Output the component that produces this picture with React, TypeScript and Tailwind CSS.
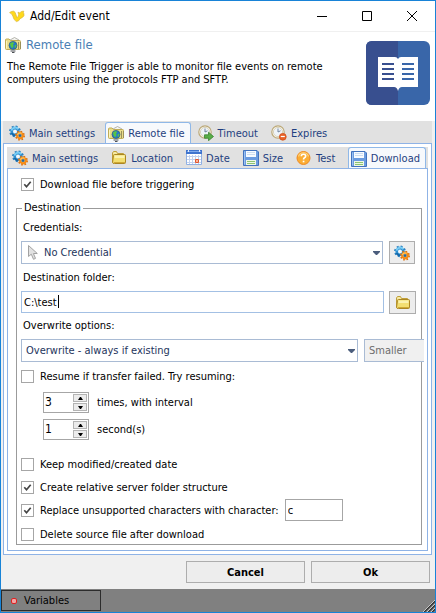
import { useState, type ReactNode } from "react";

function GearsIcon() {
  return (
    <svg width="16" height="16" viewBox="0 0 16 16" className="shrink-0" aria-hidden="true">
      <circle cx="6" cy="6.4" r="4.8" fill="none" stroke="#2a7fbe" strokeWidth="2.2" strokeDasharray="1.88 1.89" />
      <circle cx="6" cy="6.4" r="3.3" fill="#f4f8fb" stroke="#2f8fd0" strokeWidth="2.6" />
      <path d="M2.4 5.6A3.8 3.8 0 0 1 9.2 4.2" fill="none" stroke="#79cdf5" strokeWidth="2" />
      <path d="M2.6 8.2A3.8 3.8 0 0 0 6 10.4" fill="none" stroke="#1668a8" strokeWidth="1.8" />
      <circle cx="11" cy="10.6" r="4" fill="none" stroke="#dd7010" strokeWidth="2" strokeDasharray="1.57 1.57" />
      <circle cx="11" cy="10.6" r="2.7" fill="#fff3dc" stroke="#f58a14" strokeWidth="2.2" />
      <path d="M8.4 9.8A2.8 2.8 0 0 1 12.6 8.4" fill="none" stroke="#ffc35a" strokeWidth="1.2" />
      <circle cx="11" cy="10.6" r="1.5" fill="#2a6a98" />
    </svg>
  );
}

function RemoteFolderIcon() {
  return (
    <svg width="16" height="16" viewBox="0 0 16 16" className="shrink-0" aria-hidden="true">
      <path d="M5 3L9.5 .5 14 3V6H5Z" fill="#f4f4f0" stroke="#a3a39b" strokeWidth=".8" />
      <path d="M.5 3Q.5 2 1.5 2H4L5.5 3.5H14.5Q15.5 3.5 15.5 4.5V11.5Q15.5 12.5 14.5 12.5H1.5Q.5 12.5 .5 11.5Z" fill="#e9dc8a" stroke="#c0ac55" />
      <path d="M1.5 4V11.5" stroke="#fbf4c0" />
      <path d="M13.5 5V12M15.5 5V12" stroke="#9c9058" />
      <circle cx="8" cy="8.4" r="4" fill="#2277cf" stroke="#35657c" strokeWidth=".8" />
      <path d="M5 6.5L7.5 5 9.4 6 8 7.5 8.7 9 7 11.4 5.4 9ZM9.8 8.2L11.4 7.6 11 10.2 9.6 11Z" fill="#58c443" />
      <path d="M5.5 14H10.5M7 15.5H9.5" stroke="#4b4f54" />
    </svg>
  );
}

function FolderIcon() {
  return (
    <svg width="16" height="16" viewBox="0 0 16 16" className="shrink-0" aria-hidden="true">
      <path d="M1.5 12.5V3L2.5 1.5H5.5L6.5 3.5H12.5V6" fill="#f6eaa4" stroke="#bf9f3a" />
      <path d="M2.5 5.5Q2.5 4.5 3.5 4.5H13.5Q14.5 4.5 14.5 5.5V12.5Q14.5 13.5 13.5 13.5H3.5Q1.5 13.5 1.5 12.5Z" fill="#f3df71" stroke="#ab8622" />
      <path d="M3.5 5.5H13.5V8H3.5Z" fill="#fbf2b0" />
      <path d="M3 12.5H14" stroke="#cfa935" />
    </svg>
  );
}

function ClockIcon({ badge }: { badge: "go" | "stop" }) {
  return (
    <svg width="16" height="16" viewBox="0 0 16 16" className="shrink-0" aria-hidden="true">
      <circle cx="7" cy="7" r="6.2" fill="#fdfdf8" stroke="#bba878" strokeWidth="1.2" />
      <circle cx="7" cy="7" r="4.6" fill="#eef3f8" stroke="#d5cdb4" strokeWidth=".9" />
      <path d="M7 3.5V7L9.5 5.8" fill="none" stroke="#7385a0" strokeWidth="1" />
      {badge === "go" ? (
        <path d="M6.5 9.8H10.5V7.2L15.5 11.5 10.5 15.7V13.2H6.5Z" fill="#58ae48" stroke="#3a8430" strokeWidth=".8" />
      ) : (
        <>
          <circle cx="11.8" cy="11.8" r="3.4" fill="#e9642a" stroke="#cf4f1c" strokeWidth=".8" />
          <path d="M9.8 11.5H13.8" stroke="#fff" strokeWidth="1.2" />
        </>
      )}
    </svg>
  );
}

function CalendarIcon() {
  return (
    <svg width="16" height="16" viewBox="0 0 16 16" className="shrink-0" aria-hidden="true">
      <path d="M.5 1.5H15.5V14.5H.5Z" fill="#fff" stroke="#8fb0e4" />
      <path d="M0 0H16V4H0Z" fill="#3f74ce" />
      <path d="M1 1H15V2H1Z" fill="#7ea9ec" />
      <path d="M2.5 0V2M13.5 0V2" stroke="#e4eefc" />
      <path d="M3.5 5V14M6.5 5V14M9.5 5V14M12.5 5V14M1 6.5H15M1 9.5H15M1 12.5H15" stroke="#c2d2ee" />
      <path d="M9.5 9.5H12.5V12.5H9.5Z" fill="#f8b49c" stroke="#e0562f" />
    </svg>
  );
}

function DiskIcon() {
  return (
    <svg width="16" height="16" viewBox="0 0 16 16" className="shrink-0" aria-hidden="true">
      <path d="M.5 .5H14L15.5 2V15.5H.5Z" fill="#6a9be0" stroke="#4272bd" />
      <path d="M1.5 1.5V14.5" stroke="#9cc2f2" />
      <path d="M3 1H13V7H3Z" fill="#f7fbff" />
      <path d="M4 2.5H12M4 4.5H12" stroke="#ccdcf0" />
      <path d="M3 10H13V15H3Z" fill="#eef6e6" />
      <path d="M4 11.5H12M4 13.5H12" stroke="#8cc472" />
    </svg>
  );
}

function HelpIcon() {
  return (
    <svg width="16" height="16" viewBox="0 0 16 16" className="shrink-0" aria-hidden="true">
      <circle cx="7.5" cy="8" r="6.5" fill="#fbad34" stroke="#ee8a22" />
      <path d="M2.5 6.5A5.2 5.2 0 0 1 12.5 6.5" fill="none" stroke="#ffd27a" strokeWidth="1.2" />
      <path d="M5.3 6.2Q5.3 4.2 7.5 4.2T9.7 6.1Q9.7 7.2 8.5 7.8 7.5 8.3 7.5 9.5" fill="none" stroke="#fff" strokeWidth="1.6" />
      <path d="M6.7 10.7H8.4V12.3H6.7Z" fill="#fff" />
    </svg>
  );
}

function AppLogo() {
  return (
    <svg width="16" height="13" viewBox="0 0 16 13" className="shrink-0" aria-hidden="true">
      <path d="M.6 2.6Q2.6 1 4.8 1.2 6.4 1.8 7 5L8 7.6Q9.8 6.4 9.6 4.6L9 2.2Q10.6 3.4 11.6 2.2 12.4 1 14.8 1.2 14 2.4 14.8 3.4 15.8 5.8 13.4 7.4 10.8 8.2 9.6 10.8L7.4 11.6Q4.6 10 4 6.6 3.4 3.8 .6 2.6Z" fill="#ffd91c" stroke="#d9b43a" strokeWidth=".7" />
    </svg>
  );
}

function BookLogo() {
  return (
    <svg width="64" height="64" viewBox="0 0 64 64" className="shrink-0" aria-hidden="true">
      <rect width="64" height="64" rx="6" fill="#3966a9" />
      <path d="M32 0H6Q0 0 0 6V58Q0 64 6 64H32Z" fill="#384f8f" />
      <path d="M12 16H29Q31 16 32 18 33 16 35 16H52V46H36Q33 46 32 50 31 46 28 46H12Z" fill="#fff" />
      <path d="M16 23H28M16 28H28M16 33H28M16 38H28" stroke="#384f8f" strokeWidth="2" />
      <path d="M36 23H48M36 28H48M36 33H48M36 38H48" stroke="#3966a9" strokeWidth="2" />
    </svg>
  );
}

function Tab({
  icon,
  label,
  active = false,
  end = false,
}: {
  icon: ReactNode;
  label: string;
  active?: boolean;
  end?: boolean;
}) {
  return (
    <button
      type="button"
      role="tab"
      aria-selected={active}
      className={
        "flex items-center gap-1 rounded-t-[3px] border border-b-0 pr-[5px] pl-0.5 whitespace-nowrap text-[#1f3f80] " +
        (active ? "-mb-px h-[22px] border-[#8fb8e8] bg-[#f7f9fc] " : "h-[21px] border-transparent ") +
        (end ? "ml-auto" : "")
      }
    >
      {icon}
      {label}
    </button>
  );
}

function Check({ label, checked = false }: { label: string; checked?: boolean }) {
  const [on, setOn] = useState(checked);
  return (
    <label className="flex items-center gap-1.5">
      <span className="relative h-[13px] w-[13px] shrink-0">
        <input
          type="checkbox"
          checked={on}
          onChange={(e) => setOn(e.target.checked)}
          className="block h-[13px] w-[13px] appearance-none border border-[#a6a6a6] bg-white"
        />
        {on && (
          <svg viewBox="0 0 13 13" className="pointer-events-none absolute inset-0" aria-hidden="true">
            <path d="M3.3 6.3L5.5 8.8 9.7 3.8" fill="none" stroke="#444" strokeWidth="1.7" />
          </svg>
        )}
      </span>
      <span className="whitespace-nowrap">{label}</span>
    </label>
  );
}

function Arrow() {
  return (
    <svg
      width="7"
      height="4"
      viewBox="0 0 7 4"
      className="pointer-events-none absolute top-[10px] right-[3px]"
      aria-hidden="true"
    >
      <path d="M0 0H7V1L4 4H3L0 1Z" fill="#4b5d7c" />
    </svg>
  );
}

function Spinner({ id, value }: { id: string; value: number }) {
  const [n, setN] = useState(value);
  return (
    <div className="flex h-[21px] w-[46px] border border-[#a6a6a6] bg-white">
      <input
        id={id}
        inputMode="numeric"
        value={n}
        onChange={(e) => setN(Number(e.target.value) || 0)}
        className="w-0 grow pb-0.5 pl-px text-[12px] leading-4 outline-none"
      />
      <div className="flex w-[15px] flex-col gap-px py-px pr-px">
        <button type="button" aria-label="Increase" onClick={() => setN(n + 1)} className="flex grow items-center justify-center border border-[#b4b4b4] bg-[#ececec]">
          <svg width="5" height="3" viewBox="0 0 5 3" aria-hidden="true">
            <path d="M2 0H3L5 3H0Z" fill="#000" />
          </svg>
        </button>
        <button type="button" aria-label="Decrease" onClick={() => setN(n - 1)} className="flex grow items-center justify-center border border-[#b4b4b4] bg-[#ececec]">
          <svg width="5" height="3" viewBox="0 0 5 3" aria-hidden="true">
            <path d="M0 0H5L3 3H2Z" fill="#000" />
          </svg>
        </button>
      </div>
    </div>
  );
}

export default function App() {
  const [folder, setFolder] = useState("C:\\test");
  const [char, setChar] = useState("c");
  return (
    <div className="flex min-h-screen flex-col border border-[#1883d7] bg-[#f0f0f0] font-['DejaVu_Sans_Condensed','DejaVu_Sans',sans-serif] text-[11px] leading-[13px] text-black">
      <header className="flex h-[31px] items-center border-b border-[#f0f0f0] bg-white pl-2">
        <AppLogo />
        <h1 className="ml-[5px] grow text-[12px]">Add/Edit event</h1>
        <div className="flex">
          <button type="button" aria-label="Minimize" className="flex w-[45px] justify-center">
            <svg width="10" height="10" viewBox="0 0 10 10" aria-hidden="true"><path d="M0 5.5H10" stroke="#000" /></svg>
          </button>
          <button type="button" aria-label="Maximize" className="flex w-[45px] justify-center">
            <svg width="10" height="10" viewBox="0 0 10 10" aria-hidden="true"><path d="M.5 .5H9.5V9.5H.5Z" fill="none" stroke="#000" /></svg>
          </button>
          <button type="button" aria-label="Close" className="flex w-[46px] justify-center">
            <svg width="10" height="10" viewBox="0 0 10 10" aria-hidden="true"><path d="M0 0L10 10M10 0L0 10" stroke="#000" /></svg>
          </button>
        </div>
      </header>

      <section className="flex h-[89px] justify-between bg-white pr-[5px] pl-1">
        <div className="pt-[5px]">
          <div className="flex items-center gap-[5px]">
            <RemoteFolderIcon />
            <h2 className="text-[13px] leading-4 text-[#4a80b4]">Remote file</h2>
          </div>
          <p className="mt-[7px] w-[340px] pl-0.5">
            The Remote File Trigger is able to monitor file events on remote computers using the protocols FTP and SFTP.
          </p>
        </div>
        <div className="pt-[9px]">
          <BookLogo />
        </div>
      </section>

      <main className="mr-[3px] ml-0.5 flex grow flex-col">
        <div role="tablist" className="flex h-[22px] items-end gap-1 bg-[#e1e1e1] pl-[3px]">
          <Tab icon={<GearsIcon />} label="Main settings" />
          <Tab icon={<RemoteFolderIcon />} label="Remote file" active />
          <Tab icon={<ClockIcon badge="go" />} label="Timeout" />
          <Tab icon={<ClockIcon badge="stop" />} label="Expires" />
        </div>
        <div className="flex grow flex-col border border-[#8fb3e6] bg-white p-[3px]">
          <div role="tablist" className="flex h-[21px] items-end gap-1 bg-[#e1e1e1] pr-0.5 pl-0.5">
            <Tab icon={<GearsIcon />} label="Main settings" />
            <Tab icon={<FolderIcon />} label="Location" />
            <Tab icon={<CalendarIcon />} label="Date" />
            <Tab icon={<DiskIcon />} label="Size" />
            <Tab icon={<HelpIcon />} label="Test" />
            <Tab icon={<DiskIcon />} label="Download" active end />
          </div>
          <form className="grow border border-[#8fb3e6] pt-[9px] pr-[5px] pb-[5px] pl-2" onSubmit={(e) => e.preventDefault()}>
            <div className="ml-[5px]">
              <Check label="Download file before triggering" checked />
            </div>

            <fieldset className="mt-2.5 border border-[#9b9b9b] pb-[3px] pl-1">
              <legend className="ml-px h-[14px] px-0.5">Destination</legend>
              <label htmlFor="credentials" className="mt-1.5 block pl-0.5">Credentials:</label>
              <div className="mt-[7px] mr-1.5 flex gap-1.5">
                <div className="relative grow">
                  <svg width="10" height="15" viewBox="0 0 10 15" className="pointer-events-none absolute top-1 left-[7px]" aria-hidden="true">
                    <path d="M.5 .5V11.5L3.3 9.2 5.5 14.3 7.5 13.4 5.4 8.5H9.3Z" fill="#e2e2e2" stroke="#a2a2a2" />
                  </svg>
                  <select id="credentials" className="block h-[23px] w-full appearance-none border border-[#a9bbd4] bg-white pr-4 pl-[22px] text-[#24345c] outline-none">
                    <option>No Credential</option>
                  </select>
                  <Arrow />
                </div>
                <button type="button" aria-label="Manage credentials" className="flex h-[23px] w-[26px] items-center justify-center border border-[#adadad] bg-[#ededed]">
                  <GearsIcon />
                </button>
              </div>

              <label htmlFor="folder" className="mt-[7px] block pl-0.5">Destination folder:</label>
              <div className="mt-[7px] mr-[5px] flex gap-[5px]">
                <div className="relative grow">
                  <input id="folder" value={folder} onChange={(e) => setFolder(e.target.value)} className="block h-[22px] w-full border border-[#a3c0e4] bg-white pl-0.5 outline-none" />
                  <span className="pointer-events-none absolute top-1 left-[37px] h-[13px] w-px bg-black" />
                </div>
                <button type="button" aria-label="Browse folder" className="flex h-[23px] w-[27px] items-center justify-center border border-[#adadad] bg-[#ededed]">
                  <FolderIcon />
                </button>
              </div>

              <label htmlFor="overwrite" className="mt-[5px] block pl-0.5">Overwrite options:</label>
              <div className="mt-[7px] -mr-[3px] flex gap-1.5">
                <div className="relative grow">
                  <select id="overwrite" className="block h-[23px] w-full appearance-none border border-[#a9bbd4] bg-white pr-4 pl-1 text-[#24345c] outline-none">
                    <option>Overwrite - always if existing</option>
                  </select>
                  <Arrow />
                </div>
                <select aria-label="Comparison" disabled className="relative block h-[23px] w-[60px] appearance-none border border-r-0 border-[#a9bbd4] bg-[#f0f0f0] pl-1 text-[#6d6d6d] opacity-100">
                  <option>Smaller</option>
                </select>
              </div>

              <div className="mt-2">
                <Check label="Resume if transfer failed. Try resuming:" />
              </div>
              <div className="mt-[9px] flex flex-col gap-1.5 pl-[22px]">
                <div className="flex items-center gap-2">
                  <Spinner id="times" value={3} />
                  <label htmlFor="times">times, with interval</label>
                </div>
                <div className="flex items-center gap-2">
                  <Spinner id="seconds" value={1} />
                  <label htmlFor="seconds">second(s)</label>
                </div>
              </div>

              <div className="mt-[18px] flex flex-col gap-2.5">
                <Check label="Keep modified/created date" />
                <Check label="Create relative server folder structure" checked />
              </div>
              <div className="mt-[5px] flex items-center gap-1.5">
                <Check label="Replace unsupported characters with character:" checked />
                <input aria-label="Replacement character" value={char} onChange={(e) => setChar(e.target.value)} className="h-[22px] w-[58px] border border-[#a6a6a6] bg-white pl-0.5 outline-none" />
              </div>
              <div className="mt-[7px]">
                <Check label="Delete source file after download" />
              </div>
            </fieldset>
          </form>
        </div>
      </main>

      <div className="flex justify-end gap-1.5 pt-1.5 pr-[5px] pb-1.5">
        <button type="button" className="h-[22px] w-[119px] border border-[#adadad] bg-[#ededed] font-bold">Cancel</button>
        <button type="button" className="h-[22px] w-[119px] border border-[#adadad] bg-[#ededed] font-bold">Ok</button>
      </div>

      <footer className="flex h-[23px] items-end justify-between bg-[#808080]">
        <button type="button" className="mb-px flex h-[21px] w-[100px] items-center gap-[7px] border border-[#2c2c2c] pl-[9px]">
          <span className="h-1.5 w-1.5 rounded-[2px] border border-[#d22] bg-[#f3a5a5]" />
          Variables
        </button>
        <svg width="12" height="12" viewBox="0 0 12 12" aria-hidden="true">
          <path d="M1 12L12 1M5 12L12 5M9 12L12 9" stroke="#333" strokeWidth="1.6" />
          <path d="M0 12L12 0M4 12L12 4M8 12L12 8" stroke="#e2e2e2" strokeWidth=".8" />
        </svg>
      </footer>
    </div>
  );
}
